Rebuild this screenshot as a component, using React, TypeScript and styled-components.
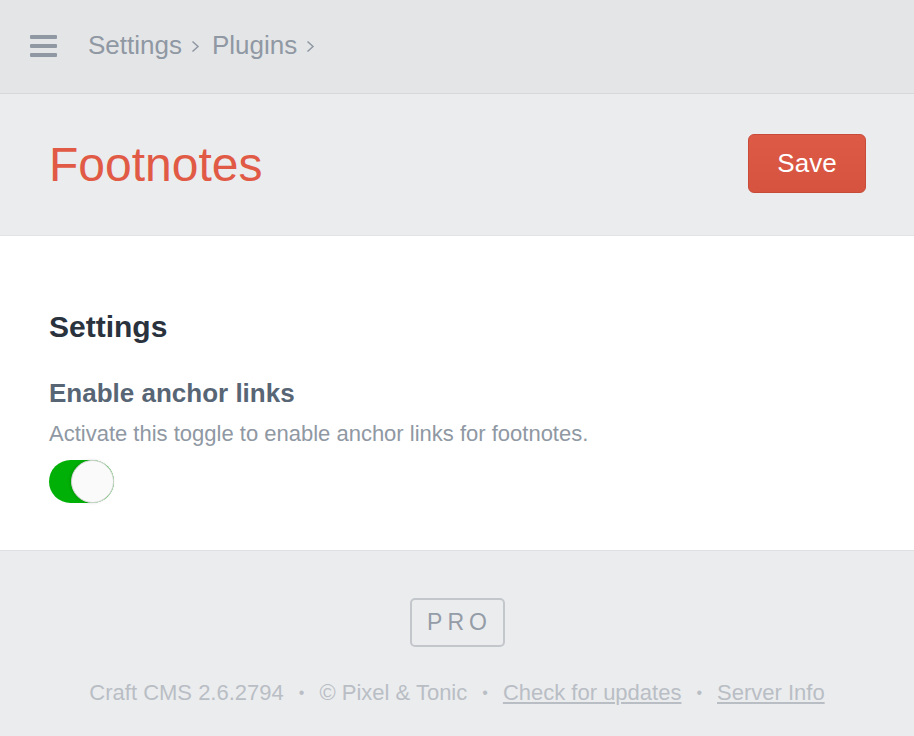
import React from 'react';
import styled, { createGlobalStyle } from 'styled-components';

const GlobalStyle = createGlobalStyle`
  body {
    margin: 0;
    background: #ebecee;
    font-family: "Liberation Sans", Helvetica, Arial, sans-serif;
    -webkit-font-smoothing: antialiased;
  }
`;

function Hamburger() {
  return (
    <svg width="27" height="22" viewBox="0 0 27 22">
      <rect x="0" y="0" width="27" height="4" rx="1" fill="#8f98a3" />
      <rect x="0" y="9" width="27" height="4" rx="1" fill="#8f98a3" />
      <rect x="0" y="18" width="27" height="4" rx="1" fill="#8f98a3" />
    </svg>
  );
}

function Chevron() {
  return (
    <ChevronIcon width="9" height="13" viewBox="0 0 9 13">
      <path d="M1.5 1.5 L7 6.5 L1.5 11.5" fill="none" stroke="#8f98a3" strokeWidth="1.5" />
    </ChevronIcon>
  );
}

function App() {
  return (
    <>
      <GlobalStyle />
      <TopBar>
        <MenuButton>
          <Hamburger />
        </MenuButton>
        <Crumbs>
          <Crumb>Settings</Crumb>
          <Chevron />
          <Crumb>Plugins</Crumb>
          <Chevron />
        </Crumbs>
      </TopBar>

      <PageHeader>
        <Title>Footnotes</Title>
        <SaveButton>Save</SaveButton>
      </PageHeader>

      <Content>
        <Heading>Settings</Heading>
        <FieldLabel>Enable anchor links</FieldLabel>
        <Instructions>Activate this toggle to enable anchor links for footnotes.</Instructions>
        <Toggle on>
          <Knob />
        </Toggle>
      </Content>

      <Footer>
        <Edition>PRO</Edition>
        <FooterLine>
          <span>Craft CMS 2.6.2794</span>
          <Dot>•</Dot>
          <span>© Pixel &amp; Tonic</span>
          <Dot>•</Dot>
          <FooterLink>Check for updates</FooterLink>
          <Dot>•</Dot>
          <FooterLink>Server Info</FooterLink>
        </FooterLine>
      </Footer>
    </>
  );
}

const TopBar = styled.header`
  display: flex;
  align-items: center;
  height: 93px;
  padding-left: 30px;
  background: #e4e5e7;
  border-bottom: 1px solid #d6d8db;
`;

const MenuButton = styled.div`
  display: flex;
  width: 27px;
  height: 22px;
  margin-top: -2px;
  margin-right: 31px;
`;

const Crumbs = styled.nav`
  display: flex;
  align-items: center;
  margin-top: -4px;
`;

const Crumb = styled.span`
  font-size: 26px;
  line-height: 32px;
  color: #8f98a3;
`;

const ChevronIcon = styled.svg`
  margin: 3px 12px 0 9px;
`;

const PageHeader = styled.div`
  display: flex;
  align-items: center;
  justify-content: space-between;
  height: 141px;
  padding: 0 48px 0 49px;
  background: #ebecee;
  border-bottom: 1px solid #e1e3e6;
`;

const Title = styled.h1`
  margin: 0;
  font-size: 48px;
  font-weight: normal;
  line-height: 56px;
  color: #e15a45;
`;

const SaveButton = styled.button`
  width: 118px;
  height: 59px;
  margin-top: -2px;
  border: 1px solid #c84b39;
  border-radius: 6px;
  background: linear-gradient(#dd5b46, #d5533f);
  color: #fff;
  font-family: inherit;
  font-size: 26px;
`;

const Content = styled.main`
  padding: 74px 49px 47px;
  background: #fff;
  border-bottom: 1px solid #dfe0e3;
`;

const Heading = styled.h2`
  margin: 0 0 33px;
  font-size: 30px;
  line-height: 34px;
  font-weight: bold;
  color: #29323d;
`;

const FieldLabel = styled.div`
  font-size: 26px;
  line-height: 32px;
  font-weight: bold;
  color: #576575;
`;

const Instructions = styled.p`
  margin: 11px 0 12px;
  font-size: 22px;
  line-height: 28px;
  color: #8f98a3;
`;

const Toggle = styled.div<{ on?: boolean }>`
  display: flex;
  justify-content: ${({ on }) => (on ? 'flex-end' : 'flex-start')};
  width: 65px;
  height: 43px;
  border-radius: 22px;
  background: ${({ on }) => (on ? '#00b007' : '#dfe2e5')};
`;

const Knob = styled.div`
  box-sizing: border-box;
  width: 43px;
  height: 43px;
  border-radius: 50%;
  background: #fafafa;
  border: 1px solid #d6d6d6;
  box-shadow: -1px 0 3px rgba(0, 0, 0, 0.15);
`;

const Footer = styled.footer`
  display: flex;
  flex-direction: column;
  align-items: center;
  padding-top: 47px;
  padding-bottom: 34px;
`;

const Edition = styled.div`
  box-sizing: border-box;
  display: flex;
  align-items: center;
  justify-content: center;
  width: 95px;
  height: 49px;
  padding-left: 5px;
  border: 2px solid #c3c7cc;
  border-radius: 5px;
  font-size: 23px;
  letter-spacing: 5px;
  color: #949ca7;
`;

const FooterLine = styled.div`
  margin-top: 32px;
  font-size: 22px;
  line-height: 28px;
  color: #b9bec5;
`;

const Dot = styled.span`
  margin: 0 15px;
  font-size: 16px;
  vertical-align: 2px;
`;

const FooterLink = styled.a`
  color: #b9bec5;
  text-decoration: underline;
`;

export default App;
